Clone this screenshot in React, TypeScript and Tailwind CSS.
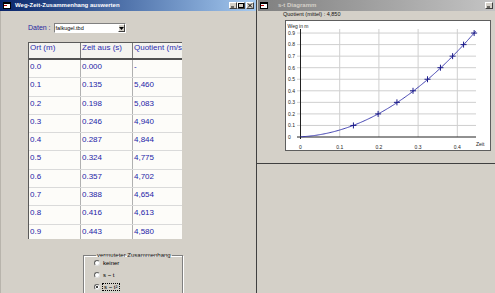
import React from 'react'

const rows = [
  ['0.0', '0.000', '-'],
  ['0.1', '0.135', '5,460'],
  ['0.2', '0.198', '5,083'],
  ['0.3', '0.246', '4,940'],
  ['0.4', '0.287', '4,844'],
  ['0.5', '0.324', '4,775'],
  ['0.6', '0.357', '4,702'],
  ['0.7', '0.388', '4,654'],
  ['0.8', '0.416', '4,613'],
  ['0.9', '0.443', '4,580'],
]

function WinIcon() {
  return (
    <svg width="8" height="7" viewBox="0 0 8 7">
      <rect x="0.5" y="0.5" width="7" height="6" fill="#fff" stroke="#000" />
      <rect x="0" y="0" width="8" height="2" fill="#000" />
      <rect x="1" y="3" width="3" height="1" fill="#c00000" />
    </svg>
  )
}

function CapButton({ kind }: { kind: 'min' | 'max' | 'close' }) {
  return (
    <div className="flex h-[7px] w-[8px] items-center justify-center border-t border-l border-b border-r border-t-white border-l-white border-b-[#404040] border-r-[#404040] bg-[#d4d0c8]">
      <svg width="6" height="5" viewBox="0 0 6 5">
        {kind === 'min' && <rect x="1" y="3.5" width="3" height="1" fill="#000" />}
        {kind === 'max' && <rect x="0.5" y="0.5" width="5" height="4" fill="none" stroke="#000" />}
        {kind === 'close' && (
          <path d="M1 0.5 L5 4.5 M5 0.5 L1 4.5" stroke="#000" strokeWidth="1" />
        )}
      </svg>
    </div>
  )
}

function Radio({ checked }: { checked?: boolean }) {
  return (
    <span className="flex h-[6px] w-[6px] items-center justify-center rounded-full border border-t-[#606060] border-l-[#606060] border-b-[#e0e0e0] border-r-[#e0e0e0] bg-white">
      {checked && <span className="h-[2px] w-[2px] rounded-full bg-black" />}
    </span>
  )
}

// chart geometry, inside the framed box (origin at page x 286, y 21)
const X0 = 14.5
const Y0 = 116
const tx = (t: number) => X0 + t * 392
const sy = (s: number) => Y0 - s * 115.5

function Chart() {
  const pts: string[] = []
  for (let t = 0; t <= 0.4491; t += 0.003) {
    const s = 4.2 * (t + 0.02) * (t + 0.02)
    pts.push(`${tx(t).toFixed(2)},${sy(s).toFixed(2)}`)
  }
  const data = rows.slice(1).map(r => [parseFloat(r[1]), parseFloat(r[0])])
  return (
    <svg width="204" height="129" viewBox="0 0 204 129" className="block">
      {[1, 2, 3, 4, 5, 6, 7, 8, 9].map(i => (
        <line key={'h' + i} x1="11" x2="190" y1={sy(i / 10)} y2={sy(i / 10)} stroke="#cfcfcf" strokeWidth="1" />
      ))}
      {[1, 2, 3, 4].map(i => (
        <line key={'v' + i} x1={tx(i / 10)} x2={tx(i / 10)} y1="8" y2={Y0} stroke="#cfcfcf" strokeWidth="1" />
      ))}
      <line x1="11" x2="190" y1={Y0} y2={Y0} stroke="#222" strokeWidth="1" />
      <line x1={X0} x2={X0} y1="8" y2={Y0 + 2} stroke="#222" strokeWidth="1" />
      <text x="1.5" y="6.5" fontSize="5" fill="#222">Weg in m</text>
      {[0, 1, 2, 3, 4, 5, 6, 7, 8, 9].map(i => (
        <text key={'yl' + i} x="2" y={sy(i / 10) + 1.8} fontSize="5" fill="#222">
          {i === 0 ? '0' : (i / 10).toFixed(1)}
        </text>
      ))}
      {[0, 1, 2, 3, 4].map(i => (
        <text key={'xl' + i} x={tx(i / 10)} y="128" fontSize="5" fill="#222" textAnchor="middle">
          {i === 0 ? '0' : (i / 10).toFixed(1)}
        </text>
      ))}
      <text x="190" y="125" fontSize="5" fill="#222">Zeit</text>
      <polyline points={pts.join(' ')} fill="none" stroke="#3030a8" strokeWidth="0.9" />
      {data.map(([t, s], i) => (
        <path
          key={'m' + i}
          d={`M${tx(t) - 3} ${sy(s)} H${tx(t) + 3} M${tx(t)} ${sy(s) - 3} V${sy(s) + 3}`}
          stroke="#1c1c8a"
          strokeWidth="1"
        />
      ))}
    </svg>
  )
}

export default function App() {
  return (
    <div className="flex h-[293px] w-[495px] overflow-hidden bg-[#d4d0c8] font-['Liberation_Sans',Arial,sans-serif]">
      {/* left window */}
      <div className="flex w-[257px] shrink-0 flex-col border-r border-[#404040]">
        <div className="flex h-[11px] shrink-0 items-center bg-gradient-to-r from-[#0a246a] to-[#a6caf0] pl-[3px] pr-[2px]">
          <WinIcon />
          <span className="ml-[4px] text-[6px] leading-[7px] font-bold text-white">
            Weg-Zeit-Zusammenhang auswerten
          </span>
          <div className="ml-auto flex items-center">
            <CapButton kind="min" />
            <CapButton kind="max" />
            <div className="ml-[1px]">
              <CapButton kind="close" />
            </div>
          </div>
        </div>
        <div className="flex min-h-0 flex-1 flex-col border-l border-[#b8b4ac] pl-[27px] pt-[12px]">
          <div className="flex h-[10px] shrink-0 items-center">
            <span className="text-[7px] leading-[8px] text-[#2626a0]">Daten :</span>
            <div className="ml-[3px] flex h-[10px] w-[72px] items-center border border-t-[#808080] border-l-[#808080] border-b-white border-r-white bg-white">
              <span className="ml-[1px] text-[5.5px] leading-[6px] text-black">falkugel.tbd</span>
              <div className="ml-auto flex h-[8px] w-[7px] items-center justify-center border border-t-white border-l-white border-b-[#404040] border-r-[#404040] bg-[#d4d0c8]">
                <svg width="5" height="3" viewBox="0 0 5 3">
                  <path d="M0 0 H5 L2.5 3 Z" fill="#000" />
                </svg>
              </div>
            </div>
          </div>

          <div className="mt-[9px] h-[197px] w-[154px] shrink-0 overflow-hidden border-t border-l border-[#5a5a5a] bg-[#fdfcf9]">
            <div className="grid h-[17px] w-[170px] grid-cols-[51px_52px_67px] border-b-2 border-[#505050] bg-[#f4f3ef] text-[8px] leading-[10px] text-[#2b2bb0]">
              <div className="pl-[1px]">Ort (m)</div>
              <div className="border-l border-[#7a7a7a] pl-[1px]">Zeit aus (s)</div>
              <div className="border-l border-[#7a7a7a] pl-[1px] whitespace-nowrap">Quotient (m/s)</div>
            </div>
            {rows.map(r => (
              <div
                key={r[0]}
                className="grid h-[18.3px] w-[170px] grid-cols-[51px_52px_67px] border-b border-[#dadada] text-[8px] leading-[9px] text-[#2424a8]"
              >
                <div className="pl-[1px] pt-[2px]">{r[0]}</div>
                <div className="border-l border-[#b0b0b0] pl-[1px] pt-[2px]">{r[1]}</div>
                <div className="border-l border-[#b0b0b0] pl-[1px] pt-[2px]">{r[2]}</div>
              </div>
            ))}
          </div>

          <fieldset className="mt-[13px] ml-[55px] w-[100px] shrink-0 border border-[#808080] pl-[10px] pb-[4px] shadow-[inset_1px_1px_0_#fff,1px_1px_0_#fff]">
            <legend className="ml-[2px] px-[1px] text-[6px] leading-[7px] text-[#111]">
              vermuteter Zusammenhang
            </legend>
            <div className="flex flex-col gap-[5.5px] pt-[1px] text-[6px] leading-[6px] text-black">
              <div className="flex items-center gap-[3px]">
                <Radio />
                <span>keiner</span>
              </div>
              <div className="flex items-center gap-[3px]">
                <Radio />
                <span>s ~ t</span>
              </div>
              <div className="flex items-center gap-[2px]">
                <Radio checked />
                <span className="border border-dotted border-black px-[1px] leading-[6px]">s ~ t²</span>
              </div>
            </div>
          </fieldset>
        </div>
      </div>

      {/* right window */}
      <div className="flex flex-1 flex-col">
        <div className="flex h-[164px] shrink-0 flex-col border-b border-[#404040]">
          <div className="ml-[1px] flex h-[11px] shrink-0 items-center bg-gradient-to-r from-[#808080] to-[#c4c4c4] pl-[2px] pr-[2px]">
            <WinIcon />
            <span className="ml-[10px] text-[6px] leading-[7px] font-bold text-[#d4d0c8]">s-t Diagramm</span>
            <div className="ml-auto">
              <CapButton kind="min" />
            </div>
          </div>
          <div className="pl-[26px] text-[5.5px] leading-[7px] text-[#111]">Quotient (mittel) : 4,850</div>
          <div className="ml-[28px] mt-[2px] h-[131px] w-[206px] border border-[#5e5e5e] bg-white">
            <Chart />
          </div>
        </div>
      </div>
    </div>
  )
}
